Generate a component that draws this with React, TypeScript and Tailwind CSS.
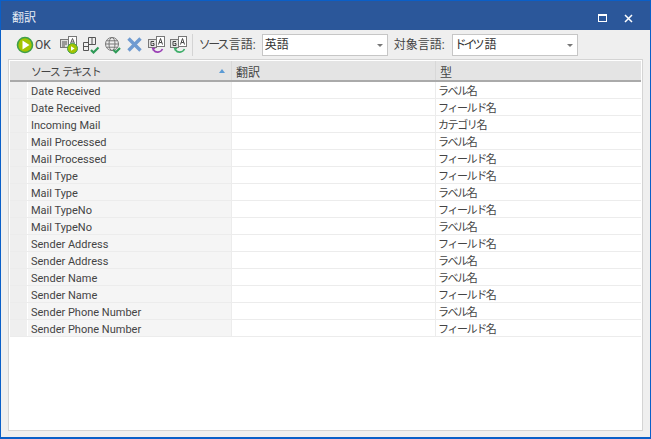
const rows = [
  ["Date Received", "ラベル名"],
  ["Date Received", "フィールド名"],
  ["Incoming Mail", "カテゴリ名"],
  ["Mail Processed", "ラベル名"],
  ["Mail Processed", "フィールド名"],
  ["Mail Type", "フィールド名"],
  ["Mail Type", "ラベル名"],
  ["Mail TypeNo", "フィールド名"],
  ["Mail TypeNo", "ラベル名"],
  ["Sender Address", "フィールド名"],
  ["Sender Address", "ラベル名"],
  ["Sender Name", "ラベル名"],
  ["Sender Name", "フィールド名"],
  ["Sender Phone Number", "ラベル名"],
  ["Sender Phone Number", "フィールド名"],
];

function OkIcon() {
  return (
    <svg width="18" height="18" viewBox="0 0 18 18" aria-hidden>
      <circle cx="9" cy="9" r="7.5" fill="#a4c400" stroke="#3f9f4a" strokeWidth="1.6" />
      <path d="M6.5 4.5L13.5 9L6.5 13.5z" fill="#fff" />
    </svg>
  );
}

function Check({ color = "#2f9a57" }: { color?: string }) {
  return <path d="M9.5 14l2.3 2.3 4.2-4.3" fill="none" stroke={color} strokeWidth="2.2" />;
}

function AddLabelIcon() {
  return (
    <svg width="18" height="18" viewBox="0 0 18 18" aria-hidden>
      <rect x="0.5" y="3.5" width="8" height="8" fill="#ddd" stroke="#777" />
      <path d="M2 6h5M2 8h5M2 10h3" stroke="#555" />
      <rect x="8.5" y="0.5" width="8" height="9" fill="#fff" stroke="#777" />
      <path d="M10.5 7.5l2-5 2 5M11.5 6h2.2" fill="none" stroke="#555" />
      <circle cx="12.5" cy="12.5" r="5" fill="#a4c400" stroke="#3f9f4a" />
      <path d="M11 10.2l3.6 2.3-3.6 2.3z" fill="#fff" />
    </svg>
  );
}

function SplitCheckIcon() {
  return (
    <svg width="18" height="18" viewBox="0 0 18 18" aria-hidden>
      <path d="M1.5 6.5h5v8h-5zM6.5 8.5h5M6.5 1.5h7v7h-7zM10 1.5v7M1.5 10.5h5" fill="none" stroke="#555" />
      <path d="M9 14l2.5 2.5 5-5" fill="none" stroke="#2f9a57" strokeWidth="2.2" />
    </svg>
  );
}

function GlobeCheckIcon() {
  return (
    <svg width="18" height="18" viewBox="0 0 18 18" aria-hidden>
      <g fill="none" stroke="#777">
        <circle cx="8" cy="8" r="6.5" />
        <ellipse cx="8" cy="8" rx="3" ry="6.5" />
        <path d="M1.5 8h13M2.5 4.8h11M2.5 11.2h11" />
      </g>
      <Check />
    </svg>
  );
}

function CrossIcon() {
  return (
    <svg width="18" height="18" viewBox="0 0 18 18" aria-hidden>
      <path d="M2.5 2.5l12 12M14.5 2.5l-12 12" stroke="#6f9bd1" strokeWidth="3.4" />
    </svg>
  );
}

function SwapIcon({ color }: { color: string }) {
  return (
    <svg width="18" height="18" viewBox="0 0 18 18" aria-hidden>
      <rect x="0.5" y="3.5" width="8" height="8" fill="#e4e4e4" stroke="#777" />
      <path d="M6 5.5H3v4h3V7.5H4.5" fill="none" stroke="#444" />
      <rect x="8.5" y="0.5" width="8" height="10" fill="#fff" stroke="#777" />
      <path d="M10.5 8.5l2-6 2 6M11.3 6.5h2.5" fill="none" stroke="#444" />
      <path d="M5.5 14c2 3 7 3 9-1" fill="none" stroke={color} strokeWidth="1.6" />
      <path d="M3.5 11.5l4.2.6-2.8 3z" fill={color} />
    </svg>
  );
}

function Combo({ children }: { children: React.ReactNode }) {
  return (
    <div className="flex h-[22px] w-[126px] items-center justify-between border border-[#c6c6c6] bg-white pl-[2px] pr-[4px] text-[12px] text-[#333]">
      <span>{children}</span>
      <span className="mt-px h-0 w-0 border-x-[3px] border-t-[3px] border-x-transparent border-t-[#777]" />
    </div>
  );
}

export default function App() {
  return (
    <div className="flex h-[439px] w-[651px] flex-col overflow-hidden border-x border-b-[2px] border-t border-[#0a5fc8] bg-[#efefef] font-['Roboto','Noto_Sans_CJK_JP',sans-serif] text-[11px] text-[#444]">
      <div className="flex h-[29px] shrink-0 items-center justify-between bg-[#2b579a] pl-[11px] pr-[17px] pt-[5px] font-['Liberation_Sans','Noto_Sans_CJK_JP',sans-serif] text-[12px] text-[#e6ecf5]">
        <span>翻訳</span>
        <div className="flex items-center gap-[17px]">
          <span className="h-[8px] w-[9px] border border-t-2 border-white" />
          <svg width="9" height="9" viewBox="0 0 9 9" aria-hidden>
            <path d="M1 1l7 7M8 1L1 8" stroke="#fff" strokeWidth="1.5" />
          </svg>
        </div>
      </div>

      <div className="flex h-[29px] shrink-0 items-center pl-[15px]">
        <OkIcon />
        <span className="ml-px mr-[9px] text-[12px]">OK</span>
        <div className="flex gap-[4px]">
          <AddLabelIcon />
          <SplitCheckIcon />
          <GlobeCheckIcon />
          <CrossIcon />
          <SwapIcon color="#9a3fb5" />
          <SwapIcon color="#3fae6a" />
        </div>
        <span className="ml-[4px] mr-[6px] h-[22px] w-px bg-[#d4d4d4]" />
        <span className="mr-[6px] text-[12px]">
          <span className="tracking-[-2.5px]">ソース</span>
          <span className="ml-[2px]">言語:</span>
        </span>
        <Combo>英語</Combo>
        <span className="ml-[6px] mr-[7px] text-[12px]">対象言語:</span>
        <Combo>
          <span className="tracking-[-3px]">ドイツ</span>
          <span className="ml-[3px]">語</span>
        </Combo>
      </div>

      <div className="mx-[7px] mb-[6px] flex min-h-0 flex-1 flex-col border border-[#d4d4d4] bg-white px-px pt-px">
        <div className="flex h-[21px] shrink-0 border-b-2 border-[#aaaaaa] bg-[#e4e4e4]">
          <div className="w-[18px]" />
          <div className="relative flex w-[204px] items-center border-r border-[#d8d8d8] pl-[3px] pt-[5px] tracking-[-1.4px]">
            <span>ソース</span>
            <span className="ml-[3px]">テキスト</span>
            <span className="absolute right-[6px] top-[8px] h-0 w-0 border-x-[3px] border-b-[4px] border-x-transparent border-b-[#5b9bd5]" />
          </div>
          <div className="flex w-[204px] items-center border-r border-[#d8d8d8] pl-[4px] pt-[5px] text-[12px]">翻訳</div>
          <div className="flex flex-1 items-center pl-[4px] pt-[5px] text-[12px]">型</div>
        </div>
        {rows.map(([source, kind], i) => (
          <div key={i} className="flex h-[17px] shrink-0 border-b border-[#ececec]">
            <div className="mr-px w-[17px] bg-[#efefef]" />
            <div className="flex w-[204px] items-center border-r border-[#ececec] bg-[#f5f5f5] pl-[3px] pt-[5px]">{source}</div>
            <div className="w-[204px] border-r border-[#ececec]" />
            <div className="flex flex-1 items-center pl-[2px] pt-[5px] tracking-[-1.4px]">{kind}</div>
          </div>
        ))}
      </div>
    </div>
  );
}
